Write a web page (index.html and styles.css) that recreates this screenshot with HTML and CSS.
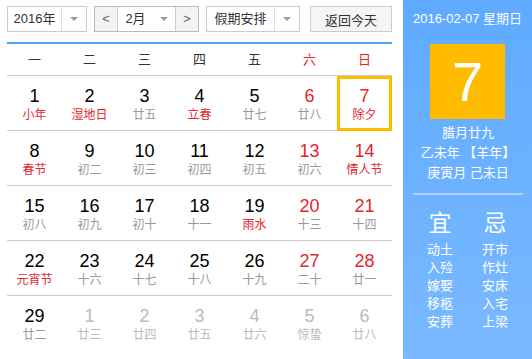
FILE: index.html
```html
<html>
<head>
    <title>万年历</title>
    <meta http-equiv="Content-Type" content="text/html; charset=utf-8"/>
    <link rel="stylesheet" href="styles.css">
</head>
<body>
<div class="calendar">
    <div class="main">
        <div class="toolbar">
            <div class="select year">
                <span class="value">2016年</span>
                <span class="arrow"><i class="caret"></i></span>
            </div>
            <div class="select month">
                <span class="step">&lt;</span>
                <span class="value">2月</span>
                <span class="arrow"><i class="caret"></i></span>
                <span class="step">&gt;</span>
            </div>
            <div class="select holiday">
                <span class="value">假期安排</span>
                <span class="arrow"><i class="caret"></i></span>
            </div>
            <button class="today-btn">返回今天</button>
        </div>

        <div class="week">
            <span>一</span><span>二</span><span>三</span><span>四</span><span>五</span>
            <span class="weekend">六</span><span class="weekend">日</span>
        </div>

        <div class="days">
            <div class="day"><b>1</b><small class="fest">小年</small></div>
            <div class="day"><b>2</b><small class="fest">湿地日</small></div>
            <div class="day"><b>3</b><small>廿五</small></div>
            <div class="day"><b>4</b><small class="fest">立春</small></div>
            <div class="day"><b>5</b><small>廿七</small></div>
            <div class="day weekend"><b>6</b><small>廿八</small></div>
            <div class="day weekend today"><b>7</b><small class="fest">除夕</small></div>

            <div class="day"><b>8</b><small class="fest">春节</small></div>
            <div class="day"><b>9</b><small>初二</small></div>
            <div class="day"><b>10</b><small>初三</small></div>
            <div class="day"><b>11</b><small>初四</small></div>
            <div class="day"><b>12</b><small>初五</small></div>
            <div class="day weekend"><b>13</b><small>初六</small></div>
            <div class="day weekend"><b>14</b><small class="fest">情人节</small></div>

            <div class="day"><b>15</b><small>初八</small></div>
            <div class="day"><b>16</b><small>初九</small></div>
            <div class="day"><b>17</b><small>初十</small></div>
            <div class="day"><b>18</b><small>十一</small></div>
            <div class="day"><b>19</b><small class="fest">雨水</small></div>
            <div class="day weekend"><b>20</b><small>十三</small></div>
            <div class="day weekend"><b>21</b><small>十四</small></div>

            <div class="day"><b>22</b><small class="fest">元宵节</small></div>
            <div class="day"><b>23</b><small>十六</small></div>
            <div class="day"><b>24</b><small>十七</small></div>
            <div class="day"><b>25</b><small>十八</small></div>
            <div class="day"><b>26</b><small>十九</small></div>
            <div class="day weekend"><b>27</b><small>二十</small></div>
            <div class="day weekend"><b>28</b><small>廿一</small></div>

            <div class="day"><b>29</b><small>廿二</small></div>
            <div class="day other"><b>1</b><small>廿三</small></div>
            <div class="day other"><b>2</b><small>廿四</small></div>
            <div class="day other"><b>3</b><small>廿五</small></div>
            <div class="day other"><b>4</b><small>廿六</small></div>
            <div class="day other"><b>5</b><small>惊蛰</small></div>
            <div class="day other"><b>6</b><small>廿八</small></div>
        </div>
    </div>

    <div class="side">
        <div class="date-line">2016-02-07 星期日</div>
        <div class="big-day">7</div>
        <div class="lunar">
            <p>腊月廿九</p>
            <p>乙未年 【羊年】</p>
            <p>庚寅月 己未日</p>
        </div>
        <div class="almanac">
            <div class="col">
                <h3>宜</h3>
                <p>动土</p>
                <p>入殓</p>
                <p>嫁娶</p>
                <p>移柩</p>
                <p>安葬</p>
            </div>
            <div class="col">
                <h3>忌</h3>
                <p>开市</p>
                <p>作灶</p>
                <p>安床</p>
                <p>入宅</p>
                <p>上梁</p>
            </div>
        </div>
    </div>
</div>
</body>
</html>
```

FILE: styles.css
```css
html {
    font-family: "Liberation Sans", "Noto Sans CJK SC", Arial, sans-serif;
    margin: 0;
}

body {
    margin: 0;
    width: 532px;
    height: 359px;
    overflow: hidden;
    background: white;
}

.calendar {
    display: flex;
    height: 359px;
}

.main {
    width: 385px;
    padding: 6px 11px 0 7px;
}

.toolbar {
    display: flex;
    height: 26px;
    font-size: 13px;
    color: #333;
}

.select {
    display: flex;
    border: 1px solid #ccc;
    box-sizing: border-box;
    height: 26px;
    line-height: 24px;
}

.select .value {
    flex: 1;
    text-align: center;
}

.select .arrow {
    width: 24px;
    border-left: 1px solid #ddd;
    display: flex;
    align-items: center;
    justify-content: center;
}

.caret {
    width: 0;
    height: 0;
    border-left: 4px solid transparent;
    border-right: 4px solid transparent;
    border-top: 4px solid #999;
}

.year {
    width: 80px;
}

.month {
    width: 105px;
    margin-left: 7px;
    border-color: #bbb;
}

.month .arrow {
    border-left: none;
    width: 22px;
}

.month .step {
    width: 22px;
    text-align: center;
    background: #f3f3f3;
    color: #666;
}

.month .step:first-child {
    border-right: 1px solid #ccc;
}

.month .step:last-child {
    border-left: 1px solid #ccc;
}

.holiday {
    width: 94px;
    margin-left: 7px;
}

.today-btn {
    width: 82px;
    height: 26px;
    margin-left: 10px;
    border: 1px solid #ccc;
    background: #f5f5f5;
    font-family: inherit;
    font-size: 13px;
    color: #333;
    padding: 0;
}

.week {
    display: grid;
    grid-template-columns: repeat(7, 55px);
    margin-top: 10px;
    border-top: 2px solid #4ba3f7;
    border-bottom: 1px solid #ccc;
    height: 31px;
    line-height: 31px;
    text-align: center;
    font-size: 13px;
    color: #333;
}

.week .weekend {
    color: #e3262d;
}

.days {
    display: grid;
    grid-template-columns: repeat(7, 55px);
    grid-auto-rows: 55px;
}

.day {
    display: flex;
    flex-direction: column;
    align-items: center;
    padding-top: 10px;
    box-sizing: border-box;
    border-bottom: 1px solid #ccc;
}

.days .day:nth-last-child(-n+7) {
    border-bottom: none;
}

.day b {
    font-weight: normal;
    font-size: 18px;
    line-height: 20px;
    color: #000;
}

.day small {
    font-size: 12px;
    line-height: 18px;
    color: #999;
}

.day small.fest {
    color: #e3262d;
}

.day.weekend b {
    color: #e3262d;
}

.day.other b,
.day.other small {
    color: #bbb;
}

.day.today {
    border: 3px solid #ffbb00;
    padding-top: 7px;
}

.side {
    width: 129px;
    background: linear-gradient(#5faaff, #7ab9ff);
    color: white;
    text-align: center;
}

.date-line {
    font-size: 13px;
    margin-top: 11px;
    line-height: 16px;
}

.big-day {
    width: 75px;
    height: 75px;
    margin: 17px auto 0;
    background: #ffbb00;
    font-size: 56px;
    line-height: 75px;
}

.lunar {
    margin: 4px 9px 0 10px;
    padding-bottom: 10px;
    border-bottom: 2px solid rgba(255, 255, 255, 0.45);
    font-size: 13px;
}

.lunar p {
    margin: 0;
    line-height: 20px;
}

.almanac {
    display: flex;
    justify-content: center;
    gap: 29px;
    margin-top: 15px;
}

.almanac h3 {
    margin: 0 0 5px;
    font-weight: normal;
    font-size: 23px;
    line-height: 26px;
}

.almanac p {
    margin: 0;
    font-size: 13px;
    line-height: 18px;
}
```
